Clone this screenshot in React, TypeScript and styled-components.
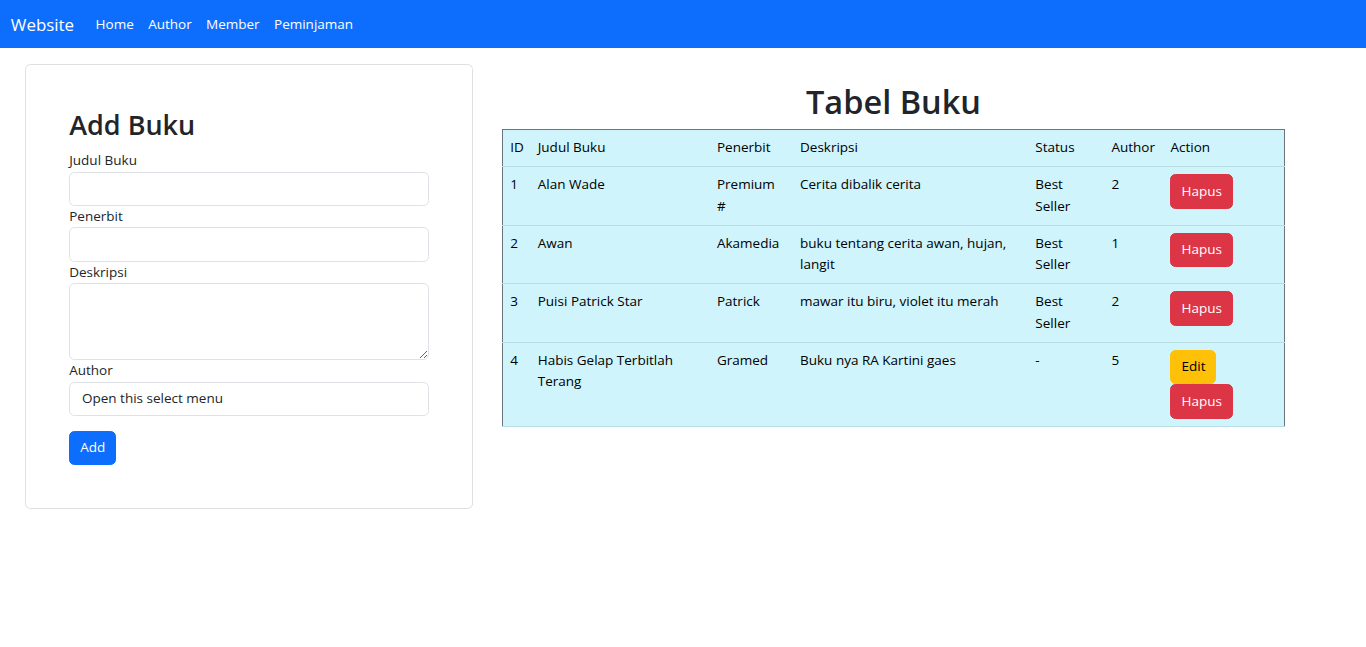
import React from "react";
import styled, { createGlobalStyle } from "styled-components";

const GlobalStyle = createGlobalStyle`
  *, *::before, *::after { box-sizing: border-box; }
  body {
    margin: 0;
    font-family: "Open Sans", "Noto Sans", sans-serif;
    font-size: 13.5px;
    line-height: 21.6px;
    color: #212529;
    background: #fff;
  }
`;

const Navbar = styled.nav`
  height: 48px;
  background: #0d6efd;
  display: flex;
  align-items: center;
  padding: 2px 10.8px 0;
`;

const Brand = styled.a`
  font-size: 16.9px;
  line-height: 30px;
  color: #fff;
  margin-right: 14.4px;
  text-decoration: none;
`;

const NavList = styled.ul`
  display: flex;
  list-style: none;
  margin: 0;
  padding: 0;
`;

const NavLink = styled.a`
  display: block;
  padding: 7.2px;
  color: #fff;
  text-decoration: none;
`;

const Main = styled.main`
  display: flex;
  align-items: flex-start;
  gap: 29px;
  padding-left: 25px;
`;

const Card = styled.section`
  width: 448px;
  margin-top: 16px;
  border: 1px solid #dfdfdf;
  border-radius: 5.4px;
  padding: 43.2px;
`;

const FormTitle = styled.h2`
  margin: 0 0 7.2px;
  font-size: 27px;
  line-height: 34.56px;
  font-weight: 600;
`;

const Label = styled.label`
  display: block;
`;

const Input = styled.input`
  display: block;
  width: 100%;
  height: 34.2px;
  border: 1px solid #dee2e6;
  border-radius: 5.4px;
  padding: 5.4px 10.8px;
  font: inherit;
  color: #212529;
  background: #fff;
`;

const TextArea = styled.textarea`
  display: block;
  width: 100%;
  height: 77.4px;
  border: 1px solid #dee2e6;
  border-radius: 5.4px;
  padding: 5.4px 10.8px;
  font: inherit;
  resize: vertical;
`;

const Select = styled.select`
  display: block;
  width: 100%;
  height: 34.2px;
  border: 1px solid #dee2e6;
  border-radius: 5.4px;
  padding: 5.4px 11.8px;
  font: inherit;
  color: #212529;
  background: #fff;
  appearance: none;
`;

const Button = styled.button<{ $variant: "primary" | "danger" | "warning" }>`
  display: inline-block;
  padding: 5.4px 10px;
  font: inherit;
  line-height: 21.6px;
  border: 1px solid transparent;
  border-radius: 5.4px;
  cursor: pointer;
  background: ${(p) =>
    p.$variant === "primary" ? "#0d6efd" : p.$variant === "danger" ? "#dc3545" : "#ffc107"};
  border-color: ${(p) =>
    p.$variant === "primary" ? "#0d6efd" : p.$variant === "danger" ? "#dc3545" : "#ffc107"};
  color: ${(p) => (p.$variant === "warning" ? "#000" : "#fff")};
`;

const SubmitRow = styled.div`
  margin-top: 14.4px;
`;

const TableSection = styled.section`
  width: 783px;
  padding-top: 32px;
`;

const TableTitle = styled.h1`
  margin: 0 0 5.8px;
  font-size: 32.5px;
  line-height: 43.2px;
  font-weight: 600;
  text-align: center;
`;

const Table = styled.table`
  width: 783px;
  table-layout: fixed;
  border-collapse: collapse;
  border: 1px solid #6c757d;
  background: #cff4fc;
  color: #000;
`;

const Th = styled.th`
  text-align: left;
  font-weight: 400;
  padding: 7.2px;
  vertical-align: top;
  border-bottom: 1px solid #badce3;
`;

const Td = styled.td`
  padding: 7.2px;
  vertical-align: top;
  border-bottom: 1px solid #badce3;
`;

const Actions = styled.div`
  display: flex;
  flex-wrap: wrap;
  align-items: flex-start;
`;

const books = [
  { id: 1, judul: "Alan Wade", penerbit: "Premium #", desk: "Cerita dibalik cerita", status: "Best Seller", author: 2, edit: false },
  { id: 2, judul: "Awan", penerbit: "Akamedia", desk: "buku tentang cerita awan, hujan, langit", status: "Best Seller", author: 1, edit: false },
  { id: 3, judul: "Puisi Patrick Star", penerbit: "Patrick", desk: "mawar itu biru, violet itu merah", status: "Best Seller", author: 2, edit: false },
  { id: 4, judul: "Habis Gelap Terbitlah Terang", penerbit: "Gramed", desk: "Buku nya RA Kartini gaes", status: "-", author: 5, edit: true },
];

const colWidths = [28, 179, 83, 235, 76, 59, 121];

export default function App() {
  return (
    <>
      <GlobalStyle />
      <Navbar>
        <Brand href="#">Website</Brand>
        <NavList>
          {["Home", "Author", "Member", "Peminjaman"].map((n) => (
            <li key={n}>
              <NavLink href="#">{n}</NavLink>
            </li>
          ))}
        </NavList>
      </Navbar>
      <Main>
        <Card>
          <FormTitle>Add Buku</FormTitle>
          <Label htmlFor="judul">Judul Buku</Label>
          <Input id="judul" type="text" />
          <Label htmlFor="penerbit">Penerbit</Label>
          <Input id="penerbit" type="text" />
          <Label htmlFor="deskripsi">Deskripsi</Label>
          <TextArea id="deskripsi" rows={3} />
          <Label htmlFor="author">Author</Label>
          <Select id="author" defaultValue="">
            <option value="">Open this select menu</option>
          </Select>
          <SubmitRow>
            <Button $variant="primary">Add</Button>
          </SubmitRow>
        </Card>
        <TableSection>
          <TableTitle>Tabel Buku</TableTitle>
          <Table>
            <colgroup>
              {colWidths.map((w, i) => (
                <col key={i} style={{ width: w }} />
              ))}
            </colgroup>
            <thead>
              <tr>
                <Th>ID</Th>
                <Th>Judul Buku</Th>
                <Th>Penerbit</Th>
                <Th>Deskripsi</Th>
                <Th>Status</Th>
                <Th>Author</Th>
                <Th>Action</Th>
              </tr>
            </thead>
            <tbody>
              {books.map((b) => (
                <tr key={b.id}>
                  <Td>{b.id}</Td>
                  <Td>{b.judul}</Td>
                  <Td>{b.penerbit}</Td>
                  <Td>{b.desk}</Td>
                  <Td>{b.status}</Td>
                  <Td>{b.author}</Td>
                  <Td>
                    <Actions>
                      {b.edit && <Button $variant="warning">Edit</Button>}
                      <Button $variant="danger">Hapus</Button>
                    </Actions>
                  </Td>
                </tr>
              ))}
            </tbody>
          </Table>
        </TableSection>
      </Main>
    </>
  );
}
